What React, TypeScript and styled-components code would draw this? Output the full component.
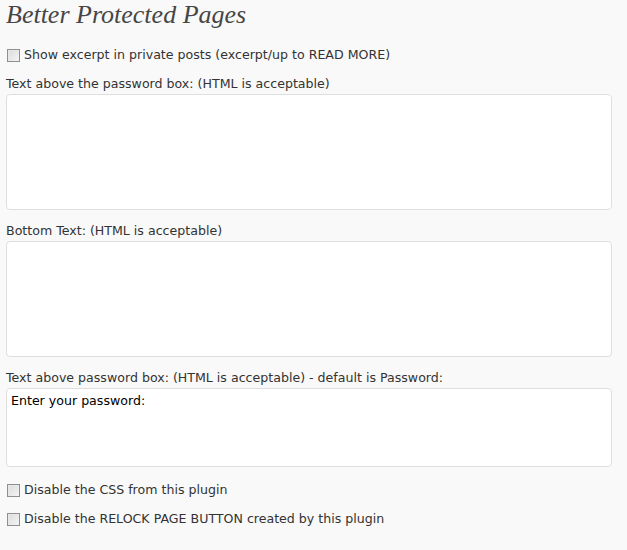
import React from "react";
import styled, { createGlobalStyle } from "styled-components";

const Global = createGlobalStyle`
  html, body { margin: 0; padding: 0; background: #f9f9f9; }
  body { font-family: "DejaVu Sans", Verdana, sans-serif; color: #333; }
`;

const Page = styled.div`
  width: 606px;
  padding: 0 0 0 6px;
  display: flex;
  flex-direction: column;
`;

const Title = styled.h2`
  margin: 0;
  height: 38px;
  padding-top: 1px;
  box-sizing: border-box;
  font-family: "Liberation Serif", serif;
  font-style: italic;
  font-weight: normal;
  font-size: 26px;
  line-height: 28px;
  color: #464646;
`;

const CheckRow = styled.label<{ $mt?: number }>`
  display: flex;
  align-items: center;
  gap: 4px;
  height: 20px;
  margin-top: ${(p) => p.$mt ?? 0}px;
  font-size: 12.6px;
  line-height: 20px;
  color: #333;
`;

const Box = styled.span`
  width: 11px;
  height: 11px;
  margin-left: 1px;
  border: 1px solid #8f8f8f;
  background: linear-gradient(135deg, #dcdcdc 0%, #f4f4f4 100%);
  box-shadow: inset 1px 1px 0 #e8e8e8;
  flex: none;
`;

const Label = styled.div<{ $mt: number }>`
  margin-top: ${(p) => p.$mt}px;
  font-size: 12.6px;
  line-height: 18px;
  height: 18px;
  color: #333;
`;

const Area = styled.div<{ $h: number }>`
  box-sizing: border-box;
  height: ${(p) => p.$h}px;
  margin-top: 1px;
  background: #fff;
  border: 1px solid #dfdfdf;
  border-radius: 4px;
  padding: 3px 4px;
  font-size: 12.6px;
  line-height: 17px;
  color: #000;
`;

export default function App() {
  return (
    <>
      <Global />
      <Page>
        <Title>Better Protected Pages</Title>
        <CheckRow $mt={7}>
          <Box />
          Show excerpt in private posts (excerpt/up to READ MORE)
        </CheckRow>
        <Label $mt={10}>Text above the password box: (HTML is acceptable)</Label>
        <Area $h={116} />
        <Label $mt={12}>Bottom Text: (HTML is acceptable)</Label>
        <Area $h={116} />
        <Label $mt={12}>Text above password box: (HTML is acceptable) - default is Password:</Label>
        <Area $h={79}>Enter your password:</Area>
        <CheckRow $mt={13}>
          <Box />
          Disable the CSS from this plugin
        </CheckRow>
        <CheckRow $mt={9}>
          <Box />
          Disable the RELOCK PAGE BUTTON created by this plugin
        </CheckRow>
      </Page>
    </>
  );
}
